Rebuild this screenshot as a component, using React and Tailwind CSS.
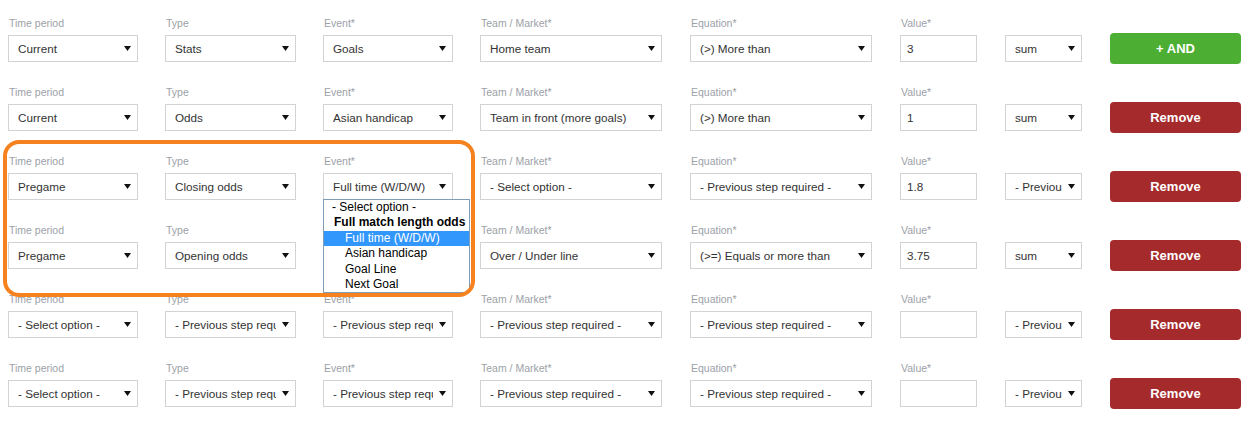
import React from "react";

const COLS = [
  { label: "Time period", w: "w-[130px] mr-[27px]" },
  { label: "Type", w: "w-[131px] mr-[27px]" },
  { label: "Event*", w: "w-[130px] mr-[27px]" },
  { label: "Team / Market*", w: "w-[182px] mr-[28px]" },
  { label: "Equation*", w: "w-[182px] mr-[28px]" },
  { label: "Value*", w: "w-[77px] mr-[28px]", input: true },
  { label: "", w: "w-[77px] mr-[28px]" },
];

const PREV = "- Previous step required -";

// row 4's event select sits under the open dropdown, so its text is left out
const ROWS = [
  { values: ["Current", "Stats", "Goals", "Home team", "(>) More than", "3", "sum"], add: true },
  { values: ["Current", "Odds", "Asian handicap", "Team in front (more goals)", "(>) More than", "1", "sum"] },
  { values: ["Pregame", "Closing odds", "Full time (W/D/W)", "- Select option -", PREV, "1.8", PREV] },
  { values: ["Pregame", "Opening odds", "", "Over / Under line", "(>=) Equals or more than", "3.75", "sum"], covered: 2 },
  { values: ["- Select option -", PREV, PREV, PREV, PREV, "", PREV] },
  { values: ["- Select option -", PREV, PREV, PREV, PREV, "", PREV] },
];

function Arrow() {
  return (
    <svg width="7" height="5" viewBox="0 0 7 5" className="shrink-0">
      <polygon points="0,0 7,0 3.5,5" fill="#111" />
    </svg>
  );
}

function FakeSelect({ value }) {
  return (
    <div className="h-[27px] border border-[#d3d3d3] bg-white flex items-center pl-[9px] pr-[6px] text-[11.7px] text-[#333]">
      <span className="flex-1 overflow-hidden whitespace-nowrap mr-[6px]">{value}</span>
      <Arrow />
    </div>
  );
}

function FakeInput({ value }) {
  return (
    <div className="h-[27px] border border-[#d3d3d3] bg-white flex items-center pl-[6px] text-[11.7px] text-[#333]">
      {value}
    </div>
  );
}

function Row({ row }) {
  return (
    <div className="flex items-start h-[69px]">
      {COLS.map((col, i) => (
        <div key={i} className={`${col.w} shrink-0`}>
          <div className="h-[14px] leading-[14px] text-[10.5px] text-[#9ca1a8] pl-[1px] whitespace-nowrap">
            {row.covered === i ? "" : col.label}
          </div>
          <div className="mt-[5px]">
            {col.input ? <FakeInput value={row.values[i]} /> : <FakeSelect value={row.values[i]} />}
          </div>
        </div>
      ))}
      <button
        className={`mt-[17px] w-[131px] h-[31px] rounded-[4px] text-white font-bold text-[13px] ${
          row.add ? "bg-[#4caf33]" : "bg-[#a52a2b]"
        }`}
      >
        {row.add ? "+ AND" : "Remove"}
      </button>
    </div>
  );
}

function EventDropdown() {
  return (
    <div className="absolute left-[323px] top-[199px] w-[147px] border border-[#7f9db9] bg-white text-[12px] leading-[15.4px] text-black">
      <div className="pl-[8px]">- Select option -</div>
      <div className="pl-[10px] font-bold">Full match length odds</div>
      <div className="pl-[21px] bg-[#3297fd] text-white">Full time (W/D/W)</div>
      <div className="pl-[21px]">Asian handicap</div>
      <div className="pl-[21px]">Goal Line</div>
      <div className="pl-[21px]">Next Goal</div>
    </div>
  );
}

export default function App() {
  return (
    <div
      className="relative w-[1250px] h-[430px] bg-white overflow-hidden pt-[16px] pl-[8px]"
      style={{ fontFamily: '"Liberation Sans", Arial, sans-serif' }}
    >
      {ROWS.map((row, i) => (
        <Row key={i} row={row} />
      ))}
      <EventDropdown />
      {/* highlight annotation */}
      <div className="absolute left-[3px] top-[140px] w-[472px] h-[157px] border-[4px] border-[#f6811f] rounded-[16px] pointer-events-none" />
    </div>
  );
}
